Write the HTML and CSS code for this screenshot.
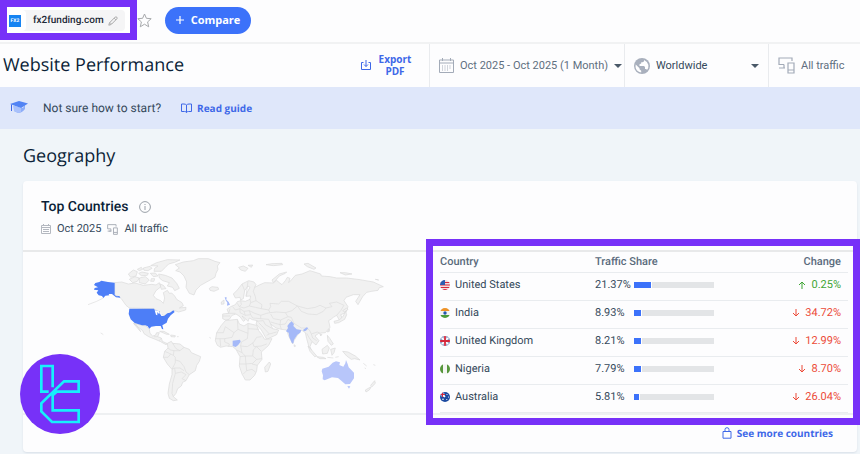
FILE: index.html
```html
<!DOCTYPE html>
<html lang="en">
<head>
<meta charset="utf-8">
<title>Website Performance</title>
<link rel="stylesheet" href="styles.css">
</head>
<body>
<header class="topbar">
  <div class="site-frame">
    <div class="site-chip">
      <span class="favicon"><b>FX2</b></span>
      <span class="site-name">fx2funding.com</span>
      <button class="icon-button" aria-label="Edit site"><svg width="10" height="10" viewBox="0 0 10 10" fill="none" stroke="#a9a9a9"><path d="M.8 9.2 1.5 6.8 7.2 1.1Q8 .5 8.8 1.2 9.5 2 8.9 2.8L3.200 8.500ZM6.200 2.200 7.800 3.800M2 6.500 3.500 8"/></svg></button>
    </div>
  </div>
  <button class="icon-button" aria-label="Add to favorites"><svg width="15" height="15" viewBox="0 0 15 15" fill="none" stroke="#a7a9ac" stroke-linejoin="round"><path d="M7.500 1 9.400 5.300 14.200 5.700 10.600 8.900 11.700 13.800 7.500 11.200 3.300 13.800 4.400 8.900.8 5.700 5.600 5.300Z"/></svg></button>
  <button class="compare"><svg width="8" height="8" viewBox="0 0 8 8" stroke="#fff" stroke-width="1.200"><path d="M4 0V8M0 4H8"/></svg>Compare</button>
</header>

<div class="titlebar">
  <h1>Website Performance</h1>
  <button class="export"><svg width="10" height="10" viewBox="0 0 10 10" fill="none" stroke="#3e68e8"><path d="M2.500 2.500H.5V9.500H9.500V2.500H7.500M5 0V6.500M3 4.500 5 6.500 7 4.500"/></svg><span>Export PDF</span></button>
  <button class="filter filter-date"><svg width="15" height="15" viewBox="0 0 15 15" fill="none" stroke="#a3abb8"><path d="M.5 2H14.500V14.500H.5ZM.5 5H14.500M3.500 0V3M11.500 0V3"/><path d="M3 8H12M3 10H12M3 12H10" stroke-dasharray="1 1.500"/></svg><span>Oct 2025 - Oct 2025 (1 Month)</span><i class="caret"></i></button>
  <button class="filter filter-region"><svg width="16" height="16" viewBox="0 0 16 16"><circle cx="8" cy="8" r="8" fill="#a9b0bd"/><path fill="#fff" d="M1.700 6.500 5.500 10.200V11.200L7.200 12.800V14.400Q3.500 14 2 10.800 1.300 8.500 1.700 6.500ZM10 2V3Q10 4 8.500 4.200H7.200V5.500L5.500 6.300V8H10L11 9V11H12.200L13 12Q14.800 10 14.400 7 13.500 3.500 10 2Z"/></svg><span>Worldwide</span><i class="caret"></i></button>
  <button class="filter filter-traffic"><svg width="17" height="17" viewBox="0 0 17 17" fill="none" stroke="#a3abb8" stroke-width="1.200"><path d="M14 4V1H1V7.500H6M3 11H6V7.500M1 11H7M10 6H16V16H10ZM10 13H16"/></svg><span>All traffic</span></button>
</div>

<aside class="guide">
  <svg width="20" height="16" viewBox="0 0 20 16"><path fill="#8dadf8" d="M5 6 14 8 16 4V9Q13 13 9 13L5 11Z"/><path fill="#5284f4" d="M1 4 10 1 19 3.500 12 8Z"/><path fill="#a9c1fb" d="M4 5.500 12 8V12L9 13 5 11Z"/><path stroke="#3e68e8" d="M2.500 4.500V11" /></svg>
  <span>Not sure how to start?</span>
  <a href="#guide"><svg width="11" height="10" viewBox="0 0 11 10" fill="none" stroke="#3e68e8"><path d="M5.500 2Q4.500 1 3 1H.5V8.500H3.500Q5 8.500 5.500 9.500 6 8.500 7.500 8.500H10.500V1H8Q6.500 1 5.500 2V9.500"/></svg>Read guide</a>
</aside>

<main>
  <h2>Geography</h2>
  <section class="card">
    <div class="card-head">
      <h3>Top Countries <svg width="12" height="12" viewBox="0 0 12 12" fill="none" stroke="#9aa0a8"><circle cx="6" cy="6" r="5.400"/><path d="M6 5V9M6 3V4"/></svg></h3>
      <p><svg width="10" height="10" viewBox="0 0 10 10" fill="none" stroke="#b4b8c0"><path d="M.5 1.500H9.500V9.500H.5ZM.5 3.500H9.500M2.500 0V2M7.500 0V2M2 5.500H8M2 7.500H8"/></svg>Oct 2025
      <svg width="11" height="11" viewBox="0 0 17 17" fill="none" stroke="#a9aeb8" stroke-width="1.500"><path d="M14 4V1H1V7.500H6M3 11H6V7.500M1 11H7M10 6H16V16H10ZM10 13H16"/></svg>All traffic</p>
    </div>
    <div class="card-body">
      <svg class="map" viewBox="23 252 403 161" role="img" aria-label="World map">
        <g transform="translate(80 250) scale(.333333)">
          <path class="land" d="M104 98 125 96 145 102 165 99 190 106 215 103 228 105 238 98 243 110 228 122 220 136 228 146 242 152 250 160 254 144 250 128 262 121 268 130 275 129 284 138 290 148 306 158 310 167 298 174 318 172 317 180 296 186 284 182 266 192 252 198 240 188 222 176 148 174 138 166 124 146 114 138 104 135Z"/>
          <path class="land" d="M145 72 160 60 172 65 168 78 152 82ZM148 88 165 80 178 84 172 94 158 98ZM178 84 196 80 208 90 196 102 178 98ZM172 58 184 52 188 58 178 62ZM190 54 210 49 216 55 204 62 192 61ZM176 70 186 66 205 70 202 76 184 77ZM212 47 230 38 262 29 300 30 284 37 266 42 256 52 244 64 222 64 224 55 234 48ZM211 70 226 69 234 78 220 80ZM236 72 256 76 276 84 290 100 298 115 284 122 278 112 262 108 268 98 248 92 238 84ZM214 86 224 86 222 94 212 94ZM240 102 250 106 258 116 244 118Z"/>
          <path class="land" d="M286 44 310 36 340 32 355 26 385 26 405 34 420 38 412 48 414 58 408 70 405 82 380 96 362 106 348 120 342 135 328 130 318 112 320 96 312 78 300 66 287 62 298 54ZM388 115 396 110 414 112 416 118 402 124 390 121Z"/>
          <path class="land" d="M160 220 186 226 198 228 208 238 210 250 218 258 226 256 230 248 238 248 233 260 244 264 247 274 262 281 258 284 242 275 226 268 206 260 192 251 188 242ZM162 222 166 221 178 238 182 245 174 236ZM239 244 252 244 268 253 260 253ZM272 255 286 257 285 261 273 260ZM291 260 296 260"/>
          <path class="land" d="M262 280 274 274 278 280 300 282 312 292 328 298 334 308 362 320 358 334 350 346 346 362 328 374 318 392 308 397 304 408 293 416 288 430 280 440 292 450 280 452 268 445 264 430 268 402 276 374 276 358 262 342 250 322 254 304 264 294Z"/>
          <path class="border" d="M264 294 272 300 282 302 280 316 286 322 286 338 276 358M254 304 268 310 280 316M278 280 288 296 300 302 312 292M300 302 282 302M286 330 300 334 312 350 318 366 328 374M276 358 284 354 300 354 312 362 M284 354 286 370 278 400 276 430 280 440M304 366 318 374 306 386 318 392M286 370 304 366M250 322 264 322 272 312M233 260 222 260M244 264 238 272"/>
          <path class="border" d="M70 144 50 154 24 164M62 249 66 251 70 254M388 262 393 265"/>
          <path class="top" d="M46 99 58 96 64 92 84 96 104 98V135L110 139 118 138 121 143 108 142 96 132 86 132 88 136 76 137 70 144 66 138 56 136 50 128 55 121 42 119 44 114 54 112 42 105Z"/>
          <path class="top" d="M148 176H222L225 181 238 184 244 198 252 198 262 190 270 188 280 181 284 186 272 196 264 206 260 218 247 226 250 238 246 237 242 228 228 228 214 230 208 236 203 229 196 226 186 226 164 219 152 208 146 192Z"/>
          <path fill="#fff" d="M224 181 236 183 240 190 236 191 232 186 232 196 228 194ZM239 186 245 190 243 196Z"/>
        </g>
        <g transform="translate(220 250) scale(.333333)">
          <path class="land" d="M8 192 26 190 21 178 32 170 46 164 52 155 62 152 76 154 90 148 92 138 78 139 82 126 90 112 84 108 74 122 70 146 62 150 60 142 46 144 40 132 52 120 66 102 86 92 102 96 108 104 104 112 120 104 134 98 160 99 170 91 178 98 186 104 196 92 202 82 210 85 206 98 214 90 226 76 246 72 270 62 302 72 304 78 330 80 350 84 380 84 420 89 460 96 490 110 478 113 474 121 455 124 440 127 428 140 414 164 407 154 420 134 400 134 378 142 372 152 384 170 378 188 362 194 368 208 360 214 350 196 340 202 334 207 326 212 330 232 316 248 296 250 285 258 297 272 288 285 276 275 270 290 275 302 266 288 260 266 256 248 244 240 232 256 222 272 218 282 206 258 200 240 184 238 168 234 152 222 158 236 176 240 170 254 140 268 124 240 108 222 112 212 97 209 88 204 84 214 76 205 66 198 76 210 70 214 60 200 48 192 36 196 28 208 16 210 8 206Z"/>
          <path class="land" d="M16 212 52 208 58 222 72 228 84 220 110 226 116 242 124 252 134 268 156 266 146 286 124 306 126 328 112 346 110 362 104 376 90 390 76 390 66 372 58 348 60 320 48 298 38 290 18 288 2 292 -8 286 -14 272 -10 248 4 226Z"/>
          <path class="land" d="M148 336 152 342 144 364 136 366 134 352ZM264 288 280 306 290 318 284 320 270 304ZM290 320 310 322 318 326 300 326ZM306 298 322 286 328 294 322 310 308 312ZM332 298 346 294 342 308 336 316ZM322 256 330 266 340 282 334 286 324 274ZM368 304 384 306 406 318 420 330 404 326 394 328 380 318ZM464 392 466 400 456 410 452 406ZM454 410 448 420 438 426 436 420ZM376 184 380 194 374 208 356 218 344 220 342 214 358 210 370 198ZM368 182 380 174 384 178 374 186ZM300 252 306 254 302 258ZM322 246 328 236 328 244ZM322 322 340 324M346 322 356 320M430 340 440 348M434 354 438 356M460 344 466 346M222 284 227 288 223 290Z"/>
          <path class="land" d="M160 98 156 90 178 72 200 66 196 70 178 78 168 90ZM252 42 264 40 288 54 282 58 262 50ZM360 68 376 68 396 72 376 75ZM56 52 70 48 84 55 76 64 62 60ZM84 46 98 45 94 52ZM138 44 156 41 186 40 188 44 160 47ZM466 88 476 90ZM4 156 12 150 12 162 4 163Z"/>
          <path class="border" d="M104 112 100 124 106 140 108 152 126 164 124 176 146 180 152 170 150 160 176 162 184 154 206 154 232 168 216 182 196 188 170 186 150 188 146 180M232 168 262 176 286 172 300 166 318 174 336 170 328 160 350 156 372 166 362 182 350 196M232 168 244 184 264 192 290 194 310 184 318 174M196 188 204 200 214 202 222 220 244 234 258 234 268 240 274 252 292 246 300 250M152 192 160 206 182 210 204 200M182 210 180 224 196 222 204 208 216 214M184 238 180 224 152 216M122 206 146 208 152 222M108 214 130 212 136 224 158 236M122 206 122 196 140 190 150 188M116 218 124 226 148 252 170 246M140 256 148 252M274 252 278 264 290 272M260 250 268 264 276 275M78 139 84 94M66 102 74 122"/>
          <path class="border" d="M52 160 58 170 72 174 88 168 106 172 124 176M90 148 92 158 88 168M38 170 46 180 60 176 72 184 88 182 104 190 122 196M30 176 26 190 46 190M60 176 60 188 76 196 92 194 98 204 122 206M92 158 108 152M72 184 76 196M88 182 92 194M8 198 30 198M62 152 64 164 58 170"/>
          <path class="border" d="M-10 248 10 248 16 230 42 248 54 238 52 208M42 248 36 262 14 266 14 276 28 282 26 290M54 238 84 250 84 222M84 250 82 266 64 276 62 288 82 290 100 278 110 262 124 260M84 236 116 238M62 288 66 308 76 318 98 318 100 300 110 290 124 304M98 278 102 290 124 288 140 282M60 320 76 318 78 342 58 342M78 342 98 340 110 328 126 326M98 318 110 328M78 342 80 362 96 358 106 366M70 372 80 362M66 308 50 300M96 342 112 346M-14 266 14 266M0 266 2 290"/>
          <path class="mid" d="M14 142 20 142 19 149 26 156 30 164 21 167 22 158 17 151ZM208 220 215 214 222 222 220 228 230 238 244 240 241 248 232 254 222 269 220 280 216 280 208 262 206 248 198 244 204 234 202 228ZM249 240 260 232 265 234 258 242 252 244ZM38 272 60 269 62 275 54 286 47 291 38 288Z"/>
          <path class="low" d="M307 356 326 350 338 338 348 334 360 337 358 345 370 350 376 340 378 330 383 342 386 352 402 368 402 385 390 402 376 403 364 392 354 384 336 382 314 391 308 388 309 376 305 364ZM382 408 391 409 387 416Z"/>
        </g>
      </svg>
      <div class="table-frame">
        <table>
          <thead><tr><th>Country</th><th>Traffic Share</th><th class="change">Change</th></tr></thead>
          <tbody>
            <tr><td><span class="cell"><svg class="flag" viewBox="0 0 10 10"><path fill="#f3dede" d="M0 0H10V10H0Z"/><path stroke="#d5283c" d="M0 2.500H10M0 5H10M0 7.500H10M0 9.500H10"/><path fill="#2b5db0" d="M0 0H5V5H0Z"/></svg>United States</span></td><td><span class="cell"><span class="pct">21.37%</span><span class="bar"><i style="width:22%"></i></span></span></td><td class="change up"><span class="cell"><svg class="arrow" viewBox="0 0 8 8"><path d="M4 8V1M1 4 4 1 7 4"/></svg>0.25%</span></td></tr>
            <tr><td><span class="cell"><svg class="flag" viewBox="0 0 10 10"><path fill="#f2f4f4" d="M0 0H10V10H0Z"/><path fill="#ee9328" d="M0 0H10V3H0Z"/><path fill="#4b9c3a" d="M0 7H10V10H0Z"/><circle cx="5" cy="5" r="1.700" fill="#2358ad"/></svg>India</span></td><td><span class="cell"><span class="pct">8.93%</span><span class="bar"><i style="width:10%"></i></span></span></td><td class="change down"><span class="cell"><svg class="arrow" viewBox="0 0 8 8"><path d="M4 0V7M1 4 4 7 7 4"/></svg>34.72%</span></td></tr>
            <tr><td><span class="cell"><svg class="flag" viewBox="0 0 10 10"><path fill="#294b91" d="M0 0H10V10H0Z"/><path stroke="#fff" stroke-width="1.600" d="M0 0 10 10M10 0 0 10"/><path stroke="#fff" stroke-width="3.200" d="M5 0V10M0 5H10"/><path stroke="#d5283c" stroke-width="1.800" d="M5 0V10M0 5H10"/></svg>United Kingdom</span></td><td><span class="cell"><span class="pct">8.21%</span><span class="bar"><i style="width:10%"></i></span></span></td><td class="change down"><span class="cell"><svg class="arrow" viewBox="0 0 8 8"><path d="M4 0V7M1 4 4 7 7 4"/></svg>12.99%</span></td></tr>
            <tr><td><span class="cell"><svg class="flag" viewBox="0 0 10 10"><path fill="#f4f5f3" d="M0 0H10V10H0Z"/><path fill="#57963c" d="M0 0H3V10H0ZM7 0H10V10H7Z"/></svg>Nigeria</span></td><td><span class="cell"><span class="pct">7.79%</span><span class="bar"><i style="width:10%"></i></span></span></td><td class="change down"><span class="cell"><svg class="arrow" viewBox="0 0 8 8"><path d="M4 0V7M1 4 4 7 7 4"/></svg>8.70%</span></td></tr>
            <tr><td><span class="cell"><svg class="flag" viewBox="0 0 10 10"><path fill="#1c4aa0" d="M0 0H10V10H0Z"/><path stroke="#fff" stroke-width="1.600" d="M2.500 0V5M0 2.500H5M0 0 5 5"/><path stroke="#d5283c" d="M2.500 0V5M0 2.500H5"/><g fill="#fff"><circle cx="3" cy="7.200" r=".8"/><circle cx="7" cy="2.500" r=".6"/><circle cx="8.500" cy="5" r=".6"/><circle cx="6.800" cy="7.500" r=".6"/></g></svg>Australia</span></td><td><span class="cell"><span class="pct">5.81%</span><span class="bar"><i style="width:7%"></i></span></span></td><td class="change down"><span class="cell"><svg class="arrow" viewBox="0 0 8 8"><path d="M4 0V7M1 4 4 7 7 4"/></svg>26.04%</span></td></tr>
          </tbody>
        </table>
      </div>
    </div>
    <footer><a href="#countries"><svg width="10" height="12" viewBox="0 0 10 12" fill="none" stroke="#3e68e8"><path d="M1 4.500H9V11.200H1ZM3 4.500V2.500Q3 .7 5 .7 7 .7 7 2.500V4.500"/></svg>See more countries</a></footer>
    <svg class="brand" viewBox="60 42 240 240" role="img" aria-label="Brand logo"><circle cx="180" cy="162" r="120" fill="#7731f8"/><path fill="none" stroke="#16f0fb" stroke-width="8" d="M158 142V78H124V155H146M168 155H236V124H192L124 190V214L156 246H236V211H158V166L170 155"/></svg>
  </section>
</main>
</body>
</html>
```
FILE: styles.css
```css
* { box-sizing: border-box; }
body {
  margin: 0;
  min-height: 100vh;
  background: #f0f5f9;
  color: #35495b;
  font: 11px/14px Roboto, "Liberation Sans", sans-serif;
  text-rendering: geometricPrecision;
}
svg { display: block; flex: none; }
h1, h2, h3, p { margin: 0; }
button { border: 0; padding: 0; background: none; font: inherit; color: inherit; }
a { color: #3e68e8; text-decoration: none; }

.topbar {
  display: flex;
  align-items: center;
  height: 44px;
  padding-bottom: 2px;
  background: #fdfdfe;
  border-bottom: 2px solid #f1f2f3;
}
.site-frame {
  width: 137px;
  height: 40px;
  border: 7px solid #7731f8;
  padding: 3px 5px 2px 1px;
  background: #fff;
}
.site-chip {
  display: flex;
  align-items: center;
  height: 21px;
  border-radius: 4px;
  background: #f5f5f6;
}
.favicon {
  display: flex;
  align-items: center;
  width: 18px;
  height: 21px;
  padding-left: 1px;
  background: #fff;
  border-radius: 4px;
}
.favicon b {
  width: 12px;
  background: #1784f2;
  color: #fff;
  font-size: 5px;
  line-height: 12px;
  text-align: center;
}
.site-name { width: 67px; margin: 0 8px 0 7px; font-size: 10px; font-weight: 500; color: #1d2937; }
.compare {
  display: flex;
  align-items: center;
  justify-content: center;
  gap: 7px;
  width: 86px;
  height: 27px;
  margin-left: 13px;
  border-radius: 14px;
  background: #3c72fa;
  color: #fff;
  font: 700 11px/14px "Open Sans", sans-serif;
}

.titlebar {
  display: flex;
  align-items: stretch;
  height: 43px;
  background: #fdfdfe;
  color: #5f6f80;
}
h1, h2 { font: 400 18px/24px "Open Sans", sans-serif; color: #0b1f38; }
h1 { flex: 1; align-self: center; padding: 0 0 2px 3px; }
.export {
  display: flex;
  align-items: center;
  gap: 6px;
  width: 68px;
  padding-bottom: 2px;
  color: #3e68e8;
  font: 700 10px/12px "Open Sans", sans-serif;
}
.export span { width: 36px; }
.filter {
  display: flex;
  align-items: center;
  gap: 6px;
  padding: 0 9px;
  border-left: 1px solid #e9ebee;
  white-space: nowrap;
}
.filter-date { width: 195px; }
.filter-region { width: 144px; color: #35495b; }
.filter-traffic { width: 92px; }
.caret {
  margin-left: auto;
  border: 4px solid transparent;
  border-top-color: #4a5968;
  border-bottom: 0;
}

.guide {
  display: flex;
  align-items: center;
  height: 42px;
  padding-left: 9px;
  background: #dfe7fa;
  font-size: 12px;
}
.guide span { margin: 0 20px 0 14px; }
.guide a, footer a {
  display: flex;
  align-items: center;
  gap: 5px;
  font: 700 10px/14px "Open Sans", sans-serif;
}

main { padding: 15px 3px 0 23px; }
.card {
  position: relative;
  margin-top: 13px;
  background: #fdfdfe;
  border-radius: 4px;
  box-shadow: 0 1px 2px #d9e0e8;
}
.card-head {
  height: 71px;
  padding: 17px 18px 0;
  border-bottom: 2px solid #e8e9ea;
}
h3 {
  display: flex;
  align-items: center;
  gap: 11px;
  font-size: 14px;
  line-height: 18px;
  font-weight: 500;
  color: #0b1f38;
}
.card-head p { display: flex; align-items: center; gap: 6px; margin-top: 6px; }

.card-body {
  display: grid;
  grid-template-columns: minmax(0, 403fr) minmax(0, 431fr);
  border-bottom: 2px solid #eef0f2;
}
.map { width: 100%; }
.land { fill: #f1f1f1; stroke: #dadada; stroke-width: 2; }
.border { fill: none; stroke: #dcdcdc; stroke-width: 2; }
.top { fill: #4d7ef7; }
.mid { fill: #a5b9f8; }
.low { fill: #b8c6fa; }

.table-frame { position: relative; padding: 0 9px 0 14px; }
.table-frame::after {
  content: "";
  position: absolute;
  inset: -13px -3px -12px 0;
  border: 7px solid #7731f8;
  pointer-events: none;
}
table { width: 100%; border-collapse: collapse; table-layout: fixed; }
tr { height: 28px; border-bottom: 1px solid #e9ecef; }
thead tr { height: 20px; }
th, td { padding: 0; text-align: left; font-weight: 400; }
td { padding-bottom: 3px; }
th { font-weight: 500; color: #5a6b7c; }
th:first-child { width: 38%; }
th:last-child { width: 22%; }
.cell { display: flex; align-items: center; }
.flag { width: 10px; height: 10px; margin-right: 5px; border-radius: 50%; }
.pct { width: 39px; }
.bar { width: 80px; height: 6px; background: #e3e5e7; }
.bar i { display: block; height: 6px; background: #3c72fa; border-right: 1px solid #fff; }
.change { padding-right: 7px; text-align: right; }
.change .cell { justify-content: flex-end; gap: 5px; }
.arrow { width: 8px; height: 8px; fill: none; stroke: currentColor; }
.up { color: #3fa535; }
.down { color: #ec4b38; }

footer { display: flex; justify-content: flex-end; align-items: flex-start; height: 37px; padding: 11px 24px 0 0; }
.brand { position: absolute; left: -3px; bottom: 18px; width: 80px; height: 80px; }
```
